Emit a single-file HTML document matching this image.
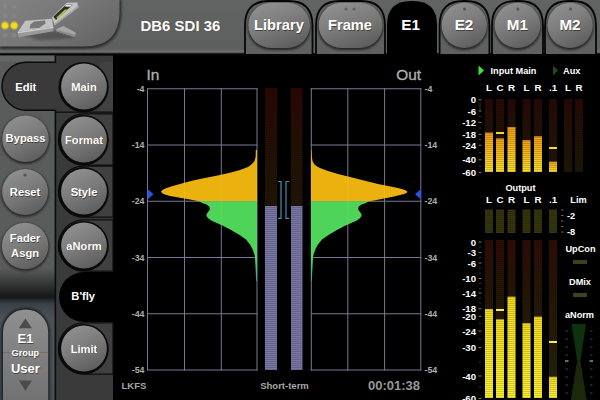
<!DOCTYPE html>
<html><head><meta charset="utf-8"><title>DB6 SDI 36</title>
<style>
html,body{margin:0;padding:0;background:#000;}
body{width:600px;height:400px;overflow:hidden;position:relative;font-family:"Liberation Sans",Arial,sans-serif;}
svg{position:absolute;left:0;top:0;display:block}
text{font-family:"Liberation Sans",Arial,sans-serif;}
.b{font-weight:bold}
.w{fill:#fff}
.s{fill:#000;opacity:.45}
</style></head><body>
<svg width="600" height="400" viewBox="0 0 600 400">
<defs>
<linearGradient id="gBar" x1="0" y1="0" x2="0" y2="1"><stop offset="0" stop-color="#626363"/><stop offset="0.9" stop-color="#5d5e5e"/><stop offset="0.955" stop-color="#6c6d6d"/><stop offset="1" stop-color="#3a3a3a"/></linearGradient>
<linearGradient id="gLogo" x1="0" y1="0" x2="1" y2="0.6"><stop offset="0" stop-color="#828282"/><stop offset="0.55" stop-color="#777"/><stop offset="1" stop-color="#666"/></linearGradient>
<linearGradient id="gBtn" x1="0.25" y1="0" x2="0.75" y2="1"><stop offset="0" stop-color="#909090"/><stop offset="0.45" stop-color="#7c7c7c"/><stop offset="1" stop-color="#5c5c5c"/></linearGradient>
<linearGradient id="gIn" x1="0" y1="0" x2="0" y2="1"><stop offset="0" stop-color="#f09c12"/><stop offset="1" stop-color="#f8de2a"/></linearGradient>
<linearGradient id="gOut" x1="0" y1="0" x2="0" y2="1"><stop offset="0" stop-color="#f2dc1c"/><stop offset="1" stop-color="#faf034"/></linearGradient>
<linearGradient id="gOff" x1="0" y1="0" x2="0" y2="1"><stop offset="0" stop-color="#2a0806"/><stop offset="0.35" stop-color="#221006"/><stop offset="1" stop-color="#1e1606"/></linearGradient>
<linearGradient id="gOff2" x1="0" y1="0" x2="0" y2="1"><stop offset="0" stop-color="#300c08"/><stop offset="0.3" stop-color="#261606"/><stop offset="1" stop-color="#24240a"/></linearGradient>
<linearGradient id="gMid" x1="0" y1="0" x2="0" y2="1"><stop offset="0" stop-color="#2c0604"/><stop offset="0.45" stop-color="#241004"/><stop offset="1" stop-color="#201606"/></linearGradient>
<linearGradient id="gCol1" x1="0" y1="0" x2="0" y2="1"><stop offset="0" stop-color="#5a5b5b"/><stop offset="0.22" stop-color="#161718"/><stop offset="0.27" stop-color="#3a4146"/><stop offset="0.38" stop-color="#4a5258"/><stop offset="1" stop-color="#485056"/></linearGradient>
<linearGradient id="gPill" x1="0" y1="0" x2="0" y2="1"><stop offset="0" stop-color="#909090"/><stop offset="0.5" stop-color="#808080"/><stop offset="1" stop-color="#727272"/></linearGradient>
<linearGradient id="gTail" x1="0" y1="0" x2="0" y2="1"><stop offset="0" stop-color="#50dc5c"/><stop offset="1" stop-color="#20b0a0"/></linearGradient>
<pattern id="pSeg" width="4" height="2" patternUnits="userSpaceOnUse"><rect width="4" height="1" y="1" fill="#000" opacity="0.16"/></pattern>
<filter id="bl" x="-20%" y="-20%" width="140%" height="140%"><feGaussianBlur stdDeviation="1.1"/></filter>
<filter id="bl2" x="-20%" y="-20%" width="140%" height="140%"><feGaussianBlur stdDeviation="0.6"/></filter>
</defs>

<rect width="600" height="400" fill="#000"/>
<rect x="0" y="0" width="600" height="54" fill="url(#gBar)"/>
<rect x="0" y="53.4" width="600" height="2.4" fill="#050505"/>
<path d="M0,0 H121.5 V12 Q121.5,49 84,49 H0 Z" fill="#1e1e1e" opacity="0.75" filter="url(#bl)"/>
<path d="M0,0 H119.5 V12 Q119.5,46.5 84,46.5 H0 Z" fill="url(#gLogo)"/>
<circle cx="5" cy="6.7" r="2.4" fill="#8c8c92" opacity="0.55"/>
<circle cx="14.2" cy="6.7" r="2.4" fill="#8c8c92" opacity="0.55"/>
<circle cx="5" cy="15.8" r="2.4" fill="#8c8c92" opacity="0.55"/>
<circle cx="14.2" cy="15.8" r="2.4" fill="#8c8c92" opacity="0.55"/>
<circle cx="5" cy="35.2" r="2.4" fill="#8c8c92" opacity="0.55"/>
<circle cx="14.2" cy="35.2" r="2.4" fill="#8c8c92" opacity="0.55"/>
<circle cx="5" cy="25.5" r="4.4" fill="#e8d020" opacity="0.45" filter="url(#bl2)"/>
<circle cx="5" cy="25.5" r="3.1" fill="#f4dc18"/>
<circle cx="14.2" cy="25.5" r="4.4" fill="#e8d020" opacity="0.45" filter="url(#bl2)"/>
<circle cx="14.2" cy="25.5" r="3.1" fill="#f4dc18"/>
<g>
<path d="M19,34 L54,30.5 L76,38 L40,40.5 Z" fill="#333" opacity="0.45" filter="url(#bl)"/>
<path d="M56,29.3 L63.3,26 L76,32.7 L74.7,36.7 L56.7,31.3 Z" fill="#a6a6a6"/>
<path d="M56.7,31.3 L74.7,36.7 L75.3,34.8 L57,29.9 Z" fill="#8a8a8a"/>
<path d="M17.7,32 L25.3,20.7 L52,18.7 L53.3,26.7 Z" fill="#c0c0c0"/>
<path d="M17.7,32 L53.3,26.7 L53.3,31.3 L18.7,37.3 Z" fill="#9a9a9a"/>
<path d="M17.7,32 L53.3,26.7 L53.3,27.9 L17.9,33.3 Z" fill="#d2d2d2"/>
<path d="M30.5,24.6 L34,21.4 L45,20.6 L45.6,23.6 L39,28 L29.5,28.6 Z" fill="#787878"/>
<path d="M52,17.3 L66.7,2.7 L77.3,2.4 L78.7,7.3 L54.7,25.3 Z" fill="#c4c4c4"/>
<path d="M77.3,2.4 L78.7,7.3 L54.7,25.3 L54.4,23.8 L77,6.4 Z" fill="#a2a2a2"/>
<path d="M53.3,16.7 L66,4.7 L72.7,4.7 L56,20 Z" fill="#2c2c2c"/>
<path d="M56.4,17.6 L65,9.4 L67.6,9.6 L57.6,19 Z" fill="#a4c630"/>
<path d="M66,4.9 L72,4.9 L70.3,6.7 L64.6,6.5 Z" fill="#e6e6e6"/>
</g>
<text x="181.0" y="31.4" text-anchor="middle" class="b s" font-size="15.5" textLength="80" lengthAdjust="spacingAndGlyphs">DB6 SDI 36</text>
<text x="180.4" y="30.5" text-anchor="middle" class="b" fill="#fff" font-size="15.5" textLength="80" lengthAdjust="spacingAndGlyphs">DB6 SDI 36</text>
<path d="M245,54 V25.5 Q245,1 269,1 H288.5 Q312.5,1 312.5,25.5 V54" fill="#5f6060" stroke="#060606" stroke-width="1.8"/>
<rect x="247.8" y="4" width="62.69999999999999" height="46" rx="22.7" ry="22.7" fill="#161616" opacity="0.8" filter="url(#bl)"/>
<rect x="248.3" y="2.8" width="61.69999999999999" height="45.2" rx="22.7" ry="22.6" fill="url(#gBtn)"/>
<text x="279.6" y="31.299999999999997" text-anchor="middle" class="b s" font-size="15.3" textLength="50" lengthAdjust="spacingAndGlyphs">Library</text>
<text x="279" y="30.4" text-anchor="middle" class="b" fill="#fff" font-size="15.3" textLength="50" lengthAdjust="spacingAndGlyphs">Library</text>
<path d="M316,54 V25.5 Q316,1 340,1 H361 Q385,1 385,25.5 V54" fill="#5f6060" stroke="#060606" stroke-width="1.8"/>
<rect x="318.2" y="4" width="64.90000000000003" height="46" rx="22.7" ry="22.7" fill="#161616" opacity="0.8" filter="url(#bl)"/>
<rect x="318.7" y="2.8" width="63.900000000000034" height="45.2" rx="22.7" ry="22.6" fill="url(#gBtn)"/>
<circle cx="346" cy="9" r="1.5" fill="#705c5c"/><circle cx="354" cy="9" r="1.5" fill="#705c5c"/>
<text x="350.6" y="31.299999999999997" text-anchor="middle" class="b s" font-size="15.3" textLength="44" lengthAdjust="spacingAndGlyphs">Frame</text>
<text x="350" y="30.4" text-anchor="middle" class="b" fill="#fff" font-size="15.3" textLength="44" lengthAdjust="spacingAndGlyphs">Frame</text>
<path d="M387,56 V25 Q387,1 411,1 H413 Q437,1 437,25 V56 Z" fill="#000"/>
<text x="410.6" y="30.4" text-anchor="middle" class="b" fill="#fff" font-size="15.3">E1</text>
<path d="M439.6,54 V25.5 Q439.6,1 463.6,1 H465.4 Q489.4,1 489.4,25.5 V54" fill="#5f6060" stroke="#060606" stroke-width="1.8"/>
<rect x="441.1" y="4" width="46.39999999999998" height="46" rx="22.69999999999999" ry="22.7" fill="#161616" opacity="0.8" filter="url(#bl)"/>
<rect x="441.6" y="2.8" width="45.39999999999998" height="45.2" rx="22.69999999999999" ry="22.6" fill="url(#gBtn)"/>
<circle cx="464.5" cy="9" r="1.5" fill="#5c5050"/>
<text x="464.6" y="31.299999999999997" text-anchor="middle" class="b s" font-size="15.3">E2</text>
<text x="464" y="30.4" text-anchor="middle" class="b" fill="#fff" font-size="15.3">E2</text>
<path d="M492,54 V25.5 Q492,1 516,1 H519 Q543,1 543,25.5 V54" fill="#5f6060" stroke="#060606" stroke-width="1.8"/>
<rect x="494.1" y="4" width="46.799999999999955" height="46" rx="22.7" ry="22.7" fill="#161616" opacity="0.8" filter="url(#bl)"/>
<rect x="494.6" y="2.8" width="45.799999999999955" height="45.2" rx="22.7" ry="22.6" fill="url(#gBtn)"/>
<circle cx="517.8" cy="9" r="1.5" fill="#5c5050"/>
<text x="517.9" y="31.299999999999997" text-anchor="middle" class="b s" font-size="15.3">M1</text>
<text x="517.3" y="30.4" text-anchor="middle" class="b" fill="#fff" font-size="15.3">M1</text>
<path d="M545,54 V25.5 Q545,1 569,1 H572 Q596,1 596,25.5 V54" fill="#5f6060" stroke="#060606" stroke-width="1.8"/>
<rect x="546.9" y="4" width="46.39999999999998" height="46" rx="22.69999999999999" ry="22.7" fill="#161616" opacity="0.8" filter="url(#bl)"/>
<rect x="547.4" y="2.8" width="45.39999999999998" height="45.2" rx="22.69999999999999" ry="22.6" fill="url(#gBtn)"/>
<circle cx="570.5" cy="9" r="1.5" fill="#5c5050"/>
<text x="570.6" y="31.299999999999997" text-anchor="middle" class="b s" font-size="15.3">M2</text>
<text x="570" y="30.4" text-anchor="middle" class="b" fill="#fff" font-size="15.3">M2</text>
<rect x="0" y="55.6" width="56" height="345" fill="#5a5b5b"/>
<rect x="0" y="55.6" width="54.5" height="6" fill="#636464"/>
<rect x="0" y="268" width="55" height="132" fill="url(#gCol1)"/>
<rect x="55" y="55.6" width="58" height="345" fill="#3a3a3a"/>
<rect x="54.6" y="55.6" width="1.6" height="345" fill="#0c0c0c"/>
<rect x="100" y="61.9" width="13" height="49.199999999999996" fill="#414141"/>
<rect x="56" y="111.5" width="57" height="1.3" fill="#0e0e0e"/>
<circle cx="83.6" cy="87.1" r="25.2" fill="#0a0a0a"/>
<circle cx="84" cy="86.5" r="22.9" fill="url(#gBtn)"/>
<text x="84.6" y="91.4" text-anchor="middle" class="b s" font-size="11.2">Main</text>
<text x="84" y="90.5" text-anchor="middle" class="b" fill="#fff" font-size="11.2">Main</text>
<path d="M113,113.9 H84 A25.6,25.6 0 0 0 84,165.1 H113 Z" fill="#404040" stroke="#0e0e0e" stroke-width="1.3"/>
<circle cx="83.6" cy="140.1" r="25.2" fill="#0a0a0a"/>
<circle cx="84" cy="139.5" r="22.9" fill="url(#gBtn)"/>
<text x="84.6" y="144.4" text-anchor="middle" class="b s" font-size="11.2">Format</text>
<text x="84" y="143.5" text-anchor="middle" class="b" fill="#fff" font-size="11.2">Format</text>
<path d="M113,166.0 H84 A25.6,25.6 0 0 0 84,217.2 H113 Z" fill="#404040" stroke="#0e0e0e" stroke-width="1.3"/>
<circle cx="83.6" cy="192.2" r="25.2" fill="#0a0a0a"/>
<circle cx="84" cy="191.6" r="22.9" fill="url(#gBtn)"/>
<text x="84.6" y="196.5" text-anchor="middle" class="b s" font-size="11.2">Style</text>
<text x="84" y="195.6" text-anchor="middle" class="b" fill="#fff" font-size="11.2">Style</text>
<path d="M113,219.9 H84 A25.6,25.6 0 0 0 84,271.1 H113 Z" fill="#404040" stroke="#0e0e0e" stroke-width="1.3"/>
<circle cx="83.6" cy="246.1" r="25.2" fill="#0a0a0a"/>
<circle cx="84" cy="245.5" r="22.9" fill="url(#gBtn)"/>
<text x="84.6" y="250.4" text-anchor="middle" class="b s" font-size="11.2">aNorm</text>
<text x="84" y="249.5" text-anchor="middle" class="b" fill="#fff" font-size="11.2">aNorm</text>
<path d="M114,272 H84 A25,25 0 0 0 84,322 H114 Z" fill="#000"/>
<text x="83.2" y="300.2" text-anchor="middle" class="b" fill="#fff" font-size="11.2">B'fly</text>
<path d="M113,322.9 H84 A25.6,25.6 0 0 0 84,374.1 H113 Z" fill="#404040" stroke="#0e0e0e" stroke-width="1.3"/>
<circle cx="83.6" cy="349.1" r="25.2" fill="#0a0a0a"/>
<circle cx="84" cy="348.5" r="22.9" fill="url(#gBtn)"/>
<text x="84.6" y="353.4" text-anchor="middle" class="b s" font-size="11.2">Limit</text>
<text x="84" y="352.5" text-anchor="middle" class="b" fill="#fff" font-size="11.2">Limit</text>
<path d="M56,62.3 H26 A24,24 0 0 0 26,110.3 H56" fill="#3a3a3a" stroke="#0a0a0a" stroke-width="1.5"/>
<rect x="54" y="63.1" width="3" height="46.4" fill="#3a3a3a"/>
<text x="25.8" y="90.5" text-anchor="middle" class="b" fill="#fff" font-size="11.2">Edit</text>
<circle cx="25.5" cy="140.0" r="24.1" fill="#1a1a1a" opacity="0.8" filter="url(#bl)"/>
<circle cx="25.5" cy="138.8" r="23.3" fill="url(#gBtn)"/>
<text x="26.1" y="143.3" text-anchor="middle" class="b s" font-size="11.2">Bypass</text>
<text x="25.5" y="142.4" text-anchor="middle" class="b" fill="#fff" font-size="11.2">Bypass</text>
<circle cx="25.1" cy="193.2" r="23.8" fill="#1a1a1a" opacity="0.8" filter="url(#bl)"/>
<circle cx="25.1" cy="192" r="23" fill="url(#gBtn)"/>
<text x="25.700000000000003" y="196.5" text-anchor="middle" class="b s" font-size="11.2">Reset</text>
<text x="25.1" y="195.6" text-anchor="middle" class="b" fill="#fff" font-size="11.2">Reset</text>
<circle cx="25.1" cy="247.2" r="24.0" fill="#1a1a1a" opacity="0.8" filter="url(#bl)"/>
<circle cx="25.1" cy="246" r="23.2" fill="url(#gBtn)"/>
<text x="25.700000000000003" y="243.3" text-anchor="middle" class="b s" font-size="11.2">Fader</text>
<text x="25.1" y="242.4" text-anchor="middle" class="b" fill="#fff" font-size="11.2">Fader</text>
<text x="25.700000000000003" y="257.5" text-anchor="middle" class="b s" font-size="11.2">Asgn</text>
<text x="25.1" y="256.6" text-anchor="middle" class="b" fill="#fff" font-size="11.2">Asgn</text>
<circle cx="25" cy="175" r="1.6" fill="#5a5252"/>
<path d="M1.2,401 V332 A24.3,24.3 0 0 1 49.8,332 V401 Z" fill="#15171a" opacity="0.85" filter="url(#bl)"/>
<path d="M3,400 V332 A22.6,22.6 0 0 1 48.2,332 V400 Z" fill="url(#gPill)"/>
<rect x="3" y="352" width="45.2" height="1" fill="#6c6c6c" opacity="0.8"/>
<path d="M25.4,318.4 L32,328.2 H18.8 Z" fill="#4c4c4c"/>
<path d="M25.4,390.8 L32,380.6 H18.8 Z" fill="#4c4c4c"/>
<text x="26.1" y="343.9" text-anchor="middle" class="b s" font-size="13">E1</text>
<text x="25.5" y="343" text-anchor="middle" class="b" fill="#fff" font-size="13">E1</text>
<text x="26.0" y="356.5" text-anchor="middle" class="b s" font-size="9.2">Group</text>
<text x="25.4" y="355.6" text-anchor="middle" class="b" fill="#fff" font-size="9.2">Group</text>
<text x="26.0" y="373.9" text-anchor="middle" class="b s" font-size="13">User</text>
<text x="25.4" y="373" text-anchor="middle" class="b" fill="#fff" font-size="13">User</text>
<rect x="147.0" y="88.25" width="110.5" height="1" fill="#787894"/>
<rect x="147.0" y="144.5" width="110.5" height="1" fill="#787894"/>
<rect x="147.0" y="200.75" width="110.5" height="1" fill="#787894"/>
<rect x="147.0" y="257.0" width="110.5" height="1" fill="#787894"/>
<rect x="147.0" y="313.25" width="110.5" height="1" fill="#787894"/>
<rect x="147.0" y="369.5" width="110.5" height="1" fill="#787894"/>
<rect x="147.0" y="88.25" width="1" height="282.25" fill="#787894"/>
<rect x="184.0" y="88.25" width="1" height="282.25" fill="#787894"/>
<rect x="220.8" y="88.25" width="1" height="282.25" fill="#787894"/>
<rect x="256.5" y="88.25" width="1" height="282.25" fill="#787894"/>
<rect x="310.8" y="88.25" width="110.5" height="1" fill="#787894"/>
<rect x="310.8" y="144.5" width="110.5" height="1" fill="#787894"/>
<rect x="310.8" y="200.75" width="110.5" height="1" fill="#787894"/>
<rect x="310.8" y="257.0" width="110.5" height="1" fill="#787894"/>
<rect x="310.8" y="313.25" width="110.5" height="1" fill="#787894"/>
<rect x="310.8" y="369.5" width="110.5" height="1" fill="#787894"/>
<rect x="310.8" y="88.25" width="1" height="282.25" fill="#787894"/>
<rect x="347.3" y="88.25" width="1" height="282.25" fill="#787894"/>
<rect x="384.1" y="88.25" width="1" height="282.25" fill="#787894"/>
<rect x="420.3" y="88.25" width="1" height="282.25" fill="#787894"/>
<path d="M311,150 L311.5,150 L311.8,156 L312.5,161 L313.5,163 L315.0,165 L317.2,166.6 L320.0,168 L328.0,171 L338.0,174 L348.0,176.6 L358.0,179 L368.0,181.6 L378.0,184 L388.0,186 L398.0,188 L405.0,190 L407.0,191.2 L407.5,192 L406.3,193 L404.0,194 L394.0,196.6 L384.0,198.6 L374.0,200.4 L369.0,201.2 L311,201.2 Z" fill="#f8bc10" opacity="0.95"/>
<path d="M311,201.2 L369.0,201.2 L365.8,202.9 L361.5,204.6 L358.8,206.4 L358.2,208 L358.4,209.9 L360.0,212 L361.4,214.25 L361.6,216 L359.6,218.6 L356.8,220.5 L353.5,222.1 L345.6,225.6 L336.9,230 L328.1,235.25 L322.0,239.6 L317.6,244.9 L315.4,249.25 L313.6,254.5 L312.9,257.4 L311,257.4 Z" fill="#52e05e" opacity="0.95"/>
<path d="M311,257 L313,257 L311.8,281 L311,281 Z" fill="url(#gTail)"/>
<path d="M257,150 L255.8,150 L255.6,157 L254.5,161 L252,164 L248,167 L240,170 L230,172.7 L220,175 L210,177 L200,179 L190,181.3 L180,184 L172,186.3 L166,188.3 L162.8,189.8 L161,191.4 L162.2,193.2 L165,194.6 L170,196 L180,197.8 L190,199.4 L199,201.25 L257,201.25 Z" fill="#f8bc10" opacity="0.95"/>
<path d="M257,201.2 L199.0,201.2 L202.2,202.9 L206.5,204.6 L209.2,206.4 L209.8,208 L209.6,209.9 L208.0,212 L206.6,214.25 L206.4,216 L208.4,218.6 L211.2,220.5 L214.5,222.1 L222.4,225.6 L231.1,230 L239.9,235.25 L246.0,239.6 L250.4,244.9 L252.6,249.25 L254.4,254.5 L255.1,257.4 L257,257.4 Z" fill="#52e05e" opacity="0.95"/>
<path d="M257,257 L255,257 L256.2,281 L257,281 Z" fill="url(#gTail)"/>
<path d="M147.5,189 L153.5,194.2 L147.5,199.4 Z" fill="#2c50e8"/>
<path d="M421,189 L415,194.2 L421,199.4 Z" fill="#2c50e8"/>
<text x="146.6" y="79.6" font-size="15.4" fill="#aeaeae" stroke="#aeaeae" stroke-width="0.35">In</text>
<text x="421" y="79.6" text-anchor="end" font-size="15.4" fill="#aeaeae" stroke="#aeaeae" stroke-width="0.35">Out</text>
<text x="144.5" y="91.95" text-anchor="end" class="b" fill="#b0b0b0" font-size="8.8">-4</text>
<text x="424.5" y="91.95" class="b" fill="#b0b0b0" font-size="8.8">-4</text>
<text x="144.5" y="148.2" text-anchor="end" class="b" fill="#b0b0b0" font-size="8.8">-14</text>
<text x="424.5" y="148.2" class="b" fill="#b0b0b0" font-size="8.8">-14</text>
<text x="144.5" y="204.45" text-anchor="end" class="b" fill="#b0b0b0" font-size="8.8">-24</text>
<text x="424.5" y="204.45" class="b" fill="#b0b0b0" font-size="8.8">-24</text>
<text x="144.5" y="260.7" text-anchor="end" class="b" fill="#b0b0b0" font-size="8.8">-34</text>
<text x="424.5" y="260.7" class="b" fill="#b0b0b0" font-size="8.8">-34</text>
<text x="144.5" y="316.95" text-anchor="end" class="b" fill="#b0b0b0" font-size="8.8">-44</text>
<text x="424.5" y="316.95" class="b" fill="#b0b0b0" font-size="8.8">-44</text>
<text x="144.5" y="373.2" text-anchor="end" class="b" fill="#b0b0b0" font-size="8.8">-54</text>
<text x="424.5" y="373.2" class="b" fill="#b0b0b0" font-size="8.8">-54</text>
<text x="121.5" y="389" class="b" fill="#a6a6a6" font-size="9.5">LKFS</text>
<text x="284.5" y="389" text-anchor="middle" class="b" fill="#a6a6a6" font-size="9.5">Short-term</text>
<text x="420" y="390" text-anchor="end" class="b" fill="#989898" font-size="13">00:01:38</text>
<rect x="265" y="88" width="12" height="118" fill="url(#gMid)"/>
<rect x="265" y="206" width="12" height="164" fill="#7876a4"/>
<rect x="265" y="88" width="12" height="282" fill="url(#pSeg)"/>
<rect x="291" y="88" width="11.5" height="118" fill="url(#gMid)"/>
<rect x="291" y="206" width="11.5" height="164" fill="#7876a4"/>
<rect x="291" y="88" width="11.5" height="282" fill="url(#pSeg)"/>
<path d="M278,181.5 H281 V218.3 H278 M289.2,181.5 H286 V218.3 H289.2" fill="none" stroke="#3f8fb4" stroke-width="1.2"/>
<path d="M478.5,65.5 L484,70.5 L478.5,75.5 Z" fill="#3ee43a"/>
<text x="490.5" y="74" class="b" fill="#fff" font-size="9.2">Input Main</text>
<path d="M553,65.5 L558,70.5 L553,75.5 Z" fill="#1e4a1e"/>
<text x="563" y="74" class="b" fill="#fff" font-size="9.2">Aux</text>
<text x="489.0" y="91" text-anchor="middle" class="b" fill="#fff" font-size="9.8">L</text>
<text x="500.0" y="91" text-anchor="middle" class="b" fill="#fff" font-size="9.8">C</text>
<text x="511.5" y="91" text-anchor="middle" class="b" fill="#fff" font-size="9.8">R</text>
<text x="526.5" y="91" text-anchor="middle" class="b" fill="#fff" font-size="9.8">L</text>
<text x="538.0" y="91" text-anchor="middle" class="b" fill="#fff" font-size="9.8">R</text>
<text x="553.0" y="91" text-anchor="middle" class="b" fill="#fff" font-size="9.8">.1</text>
<text x="568.0" y="91" text-anchor="middle" class="b" fill="#fff" font-size="9.8">L</text>
<text x="579.0" y="91" text-anchor="middle" class="b" fill="#fff" font-size="9.8">R</text>
<rect x="485" y="99" width="8" height="73" fill="url(#gOff)"/>
<rect x="485" y="132.6" width="8" height="39.400000000000006" fill="url(#gIn)"/>
<rect x="485" y="99" width="8" height="73" fill="url(#pSeg)"/>
<rect x="496" y="99" width="8" height="73" fill="url(#gOff)"/>
<rect x="496" y="138.4" width="8" height="33.599999999999994" fill="url(#gIn)"/>
<rect x="496" y="99" width="8" height="73" fill="url(#pSeg)"/>
<rect x="496" y="132" width="8" height="2" fill="#f8d830"/>
<rect x="507.5" y="99" width="8" height="73" fill="url(#gOff)"/>
<rect x="507.5" y="127" width="8" height="45" fill="url(#gIn)"/>
<rect x="507.5" y="99" width="8" height="73" fill="url(#pSeg)"/>
<rect x="522.5" y="99" width="8" height="73" fill="url(#gOff)"/>
<rect x="522.5" y="140.2" width="8" height="31.80000000000001" fill="url(#gIn)"/>
<rect x="522.5" y="99" width="8" height="73" fill="url(#pSeg)"/>
<rect x="534" y="99" width="8" height="73" fill="url(#gOff)"/>
<rect x="534" y="136.3" width="8" height="35.69999999999999" fill="url(#gIn)"/>
<rect x="534" y="99" width="8" height="73" fill="url(#pSeg)"/>
<rect x="549" y="99" width="8" height="73" fill="url(#gOff)"/>
<rect x="549" y="161.6" width="8" height="10.400000000000006" fill="url(#gIn)"/>
<rect x="549" y="99" width="8" height="73" fill="url(#pSeg)"/>
<rect x="549" y="147" width="8" height="2" fill="#f8d830"/>
<rect x="564" y="99" width="8" height="73" fill="url(#gOff)"/>
<rect x="564" y="99" width="8" height="73" fill="url(#pSeg)"/>
<rect x="575" y="99" width="8" height="73" fill="url(#gOff)"/>
<rect x="575" y="99" width="8" height="73" fill="url(#pSeg)"/>
<text x="476" y="103.3" text-anchor="end" class="b" fill="#fff" font-size="9.6">0</text>
<rect x="478.5" y="99.3" width="3" height="1" fill="#777"/>
<text x="476" y="114.5" text-anchor="end" class="b" fill="#fff" font-size="9.6">-6</text>
<rect x="478.5" y="110.5" width="3" height="1" fill="#777"/>
<text x="476" y="125.9" text-anchor="end" class="b" fill="#fff" font-size="9.6">-12</text>
<rect x="478.5" y="121.9" width="3" height="1" fill="#777"/>
<text x="476" y="137.8" text-anchor="end" class="b" fill="#fff" font-size="9.6">-18</text>
<rect x="478.5" y="133.8" width="3" height="1" fill="#777"/>
<text x="476" y="148.8" text-anchor="end" class="b" fill="#fff" font-size="9.6">-24</text>
<rect x="478.5" y="144.8" width="3" height="1" fill="#777"/>
<text x="476" y="163.3" text-anchor="end" class="b" fill="#fff" font-size="9.6">-40</text>
<rect x="478.5" y="159.3" width="3" height="1" fill="#777"/>
<text x="476" y="175.9" text-anchor="end" class="b" fill="#fff" font-size="9.6">-60</text>
<rect x="478.5" y="171.9" width="3" height="1" fill="#777"/>
<rect x="479" y="102.6" width="2" height="0.8" fill="#444"/>
<rect x="479" y="104.6" width="2" height="0.8" fill="#444"/>
<rect x="479" y="106.6" width="2" height="0.8" fill="#444"/>
<rect x="479" y="108.6" width="2" height="0.8" fill="#444"/>
<rect x="479" y="116.1" width="2" height="0.8" fill="#444"/>
<rect x="479" y="127.6" width="2" height="0.8" fill="#444"/>
<rect x="479" y="139.1" width="2" height="0.8" fill="#444"/>
<rect x="479" y="152.1" width="2" height="0.8" fill="#444"/>
<rect x="479" y="165.6" width="2" height="0.8" fill="#444"/>
<text x="520.5" y="190.5" text-anchor="middle" class="b" fill="#fff" font-size="9.2">Output</text>
<text x="489.0" y="203" text-anchor="middle" class="b" fill="#fff" font-size="9.8">L</text>
<text x="500.0" y="203" text-anchor="middle" class="b" fill="#fff" font-size="9.8">C</text>
<text x="511.5" y="203" text-anchor="middle" class="b" fill="#fff" font-size="9.8">R</text>
<text x="526.5" y="203" text-anchor="middle" class="b" fill="#fff" font-size="9.8">L</text>
<text x="538.0" y="203" text-anchor="middle" class="b" fill="#fff" font-size="9.8">R</text>
<text x="553.0" y="203" text-anchor="middle" class="b" fill="#fff" font-size="9.8">.1</text>
<text x="578.5" y="203" text-anchor="middle" class="b" fill="#fff" font-size="9.2">Lim</text>
<rect x="485" y="209.5" width="8" height="23.5" fill="#35350f"/>
<rect x="485" y="209.5" width="8" height="23.5" fill="url(#pSeg)"/>
<rect x="496" y="209.5" width="8" height="23.5" fill="#35350f"/>
<rect x="496" y="209.5" width="8" height="23.5" fill="url(#pSeg)"/>
<rect x="507.5" y="209.5" width="8" height="23.5" fill="#35350f"/>
<rect x="507.5" y="209.5" width="8" height="23.5" fill="url(#pSeg)"/>
<rect x="522.5" y="209.5" width="8" height="23.5" fill="#35350f"/>
<rect x="522.5" y="209.5" width="8" height="23.5" fill="url(#pSeg)"/>
<rect x="534" y="209.5" width="8" height="23.5" fill="#35350f"/>
<rect x="534" y="209.5" width="8" height="23.5" fill="url(#pSeg)"/>
<rect x="549" y="209.5" width="8" height="23.5" fill="#35350f"/>
<rect x="549" y="209.5" width="8" height="23.5" fill="url(#pSeg)"/>
<text x="567" y="218.8" class="b" fill="#fff" font-size="9.2">-2</text>
<text x="567" y="235.3" class="b" fill="#fff" font-size="9.2">-8</text>
<rect x="561" y="209.5" width="2.5" height="1" fill="#666"/>
<rect x="561" y="215.0" width="2.5" height="1" fill="#666"/>
<rect x="561" y="220.5" width="2.5" height="1" fill="#666"/>
<rect x="561" y="226.0" width="2.5" height="1" fill="#666"/>
<rect x="561" y="231.5" width="2.5" height="1" fill="#666"/>
<rect x="485" y="240" width="8" height="158" fill="url(#gOff2)"/>
<rect x="485" y="309" width="8" height="89" fill="url(#gOut)"/>
<rect x="485" y="240" width="8" height="158" fill="url(#pSeg)"/>
<rect x="496" y="240" width="8" height="158" fill="url(#gOff2)"/>
<rect x="496" y="319.3" width="8" height="78.69999999999999" fill="url(#gOut)"/>
<rect x="496" y="240" width="8" height="158" fill="url(#pSeg)"/>
<rect x="496" y="309" width="8" height="2" fill="#f8ee40"/>
<rect x="507.5" y="240" width="8" height="158" fill="url(#gOff2)"/>
<rect x="507.5" y="296.7" width="8" height="101.30000000000001" fill="url(#gOut)"/>
<rect x="507.5" y="240" width="8" height="158" fill="url(#pSeg)"/>
<rect x="522.5" y="240" width="8" height="158" fill="url(#gOff2)"/>
<rect x="522.5" y="323.2" width="8" height="74.80000000000001" fill="url(#gOut)"/>
<rect x="522.5" y="240" width="8" height="158" fill="url(#pSeg)"/>
<rect x="534" y="240" width="8" height="158" fill="url(#gOff2)"/>
<rect x="534" y="316.7" width="8" height="81.30000000000001" fill="url(#gOut)"/>
<rect x="534" y="240" width="8" height="158" fill="url(#pSeg)"/>
<rect x="549" y="240" width="8" height="158" fill="url(#gOff2)"/>
<rect x="549" y="376.8" width="8" height="21.19999999999999" fill="url(#gOut)"/>
<rect x="549" y="240" width="8" height="158" fill="url(#pSeg)"/>
<rect x="549" y="341" width="8" height="2" fill="#f8ee40"/>
<text x="476" y="245.5" text-anchor="end" class="b" fill="#fff" font-size="9.6">0</text>
<rect x="478.5" y="241.5" width="3" height="1" fill="#777"/>
<text x="476" y="256.0" text-anchor="end" class="b" fill="#fff" font-size="9.6">-3</text>
<rect x="478.5" y="252.0" width="3" height="1" fill="#777"/>
<text x="476" y="266.5" text-anchor="end" class="b" fill="#fff" font-size="9.6">-6</text>
<rect x="478.5" y="262.5" width="3" height="1" fill="#777"/>
<text x="476" y="282.0" text-anchor="end" class="b" fill="#fff" font-size="9.6">-10</text>
<rect x="478.5" y="278.0" width="3" height="1" fill="#777"/>
<text x="476" y="296.5" text-anchor="end" class="b" fill="#fff" font-size="9.6">-14</text>
<rect x="478.5" y="292.5" width="3" height="1" fill="#777"/>
<text x="476" y="312.2" text-anchor="end" class="b" fill="#fff" font-size="9.6">-18</text>
<rect x="478.5" y="308.2" width="3" height="1" fill="#777"/>
<text x="476" y="319.8" text-anchor="end" class="b" fill="#fff" font-size="9.6">-20</text>
<rect x="478.5" y="315.8" width="3" height="1" fill="#777"/>
<text x="476" y="334.5" text-anchor="end" class="b" fill="#fff" font-size="9.6">-24</text>
<rect x="478.5" y="330.5" width="3" height="1" fill="#777"/>
<text x="476" y="351.0" text-anchor="end" class="b" fill="#fff" font-size="9.6">-30</text>
<rect x="478.5" y="347.0" width="3" height="1" fill="#777"/>
<text x="476" y="379.5" text-anchor="end" class="b" fill="#fff" font-size="9.6">-40</text>
<rect x="478.5" y="375.5" width="3" height="1" fill="#777"/>
<text x="476" y="402.0" text-anchor="end" class="b" fill="#fff" font-size="9.6">-60</text>
<rect x="478.5" y="398.0" width="3" height="1" fill="#777"/>
<rect x="479" y="246.6" width="2" height="0.8" fill="#444"/>
<rect x="479" y="257.1" width="2" height="0.8" fill="#444"/>
<rect x="479" y="267.6" width="2" height="0.8" fill="#444"/>
<rect x="479" y="272.6" width="2" height="0.8" fill="#444"/>
<rect x="479" y="283.1" width="2" height="0.8" fill="#444"/>
<rect x="479" y="288.1" width="2" height="0.8" fill="#444"/>
<rect x="479" y="297.6" width="2" height="0.8" fill="#444"/>
<rect x="479" y="302.6" width="2" height="0.8" fill="#444"/>
<rect x="479" y="323.1" width="2" height="0.8" fill="#444"/>
<rect x="479" y="338.6" width="2" height="0.8" fill="#444"/>
<rect x="479" y="361.6" width="2" height="0.8" fill="#444"/>
<rect x="479" y="386.6" width="2" height="0.8" fill="#444"/>
<text x="580.5" y="252" text-anchor="middle" class="b" fill="#fff" font-size="9.2">UpCon</text>
<rect x="573" y="260" width="14" height="4" fill="#3a4418"/>
<text x="580" y="285" text-anchor="middle" class="b" fill="#fff" font-size="9.2">DMix</text>
<rect x="573" y="293" width="14" height="4" fill="#3a4418"/>
<text x="579.5" y="318" text-anchor="middle" class="b" fill="#fff" font-size="9.2">aNorm</text>
<path d="M571.5,324 H586 L580.3,361 L586.5,400 H571 L577.3,361 Z" fill="#0c3210"/>
<path d="M577.3,361 L571,400 H586.5 L580.3,361 Z" fill="#1c280a"/>
<rect x="565.5" y="330.5" width="2.5" height="1" fill="#444"/>
<rect x="590" y="330.5" width="2.5" height="1" fill="#444"/>
<rect x="565.5" y="338.5" width="2.5" height="1" fill="#444"/>
<rect x="590" y="338.5" width="2.5" height="1" fill="#444"/>
<rect x="565.5" y="346.5" width="2.5" height="1" fill="#444"/>
<rect x="590" y="346.5" width="2.5" height="1" fill="#444"/>
<rect x="565.5" y="354.5" width="2.5" height="1" fill="#444"/>
<rect x="590" y="354.5" width="2.5" height="1" fill="#444"/>
<rect x="565.5" y="368.5" width="2.5" height="1" fill="#444"/>
<rect x="590" y="368.5" width="2.5" height="1" fill="#444"/>
<rect x="565.5" y="376.5" width="2.5" height="1" fill="#444"/>
<rect x="590" y="376.5" width="2.5" height="1" fill="#444"/>
<rect x="565.5" y="384.5" width="2.5" height="1" fill="#444"/>
<rect x="590" y="384.5" width="2.5" height="1" fill="#444"/>
<rect x="565.5" y="392.5" width="2.5" height="1" fill="#444"/>
<rect x="590" y="392.5" width="2.5" height="1" fill="#444"/>
<rect x="565" y="360.3" width="3.5" height="1.4" fill="#999"/><rect x="589.5" y="360.3" width="3.5" height="1.4" fill="#999"/>
</svg></body></html>
